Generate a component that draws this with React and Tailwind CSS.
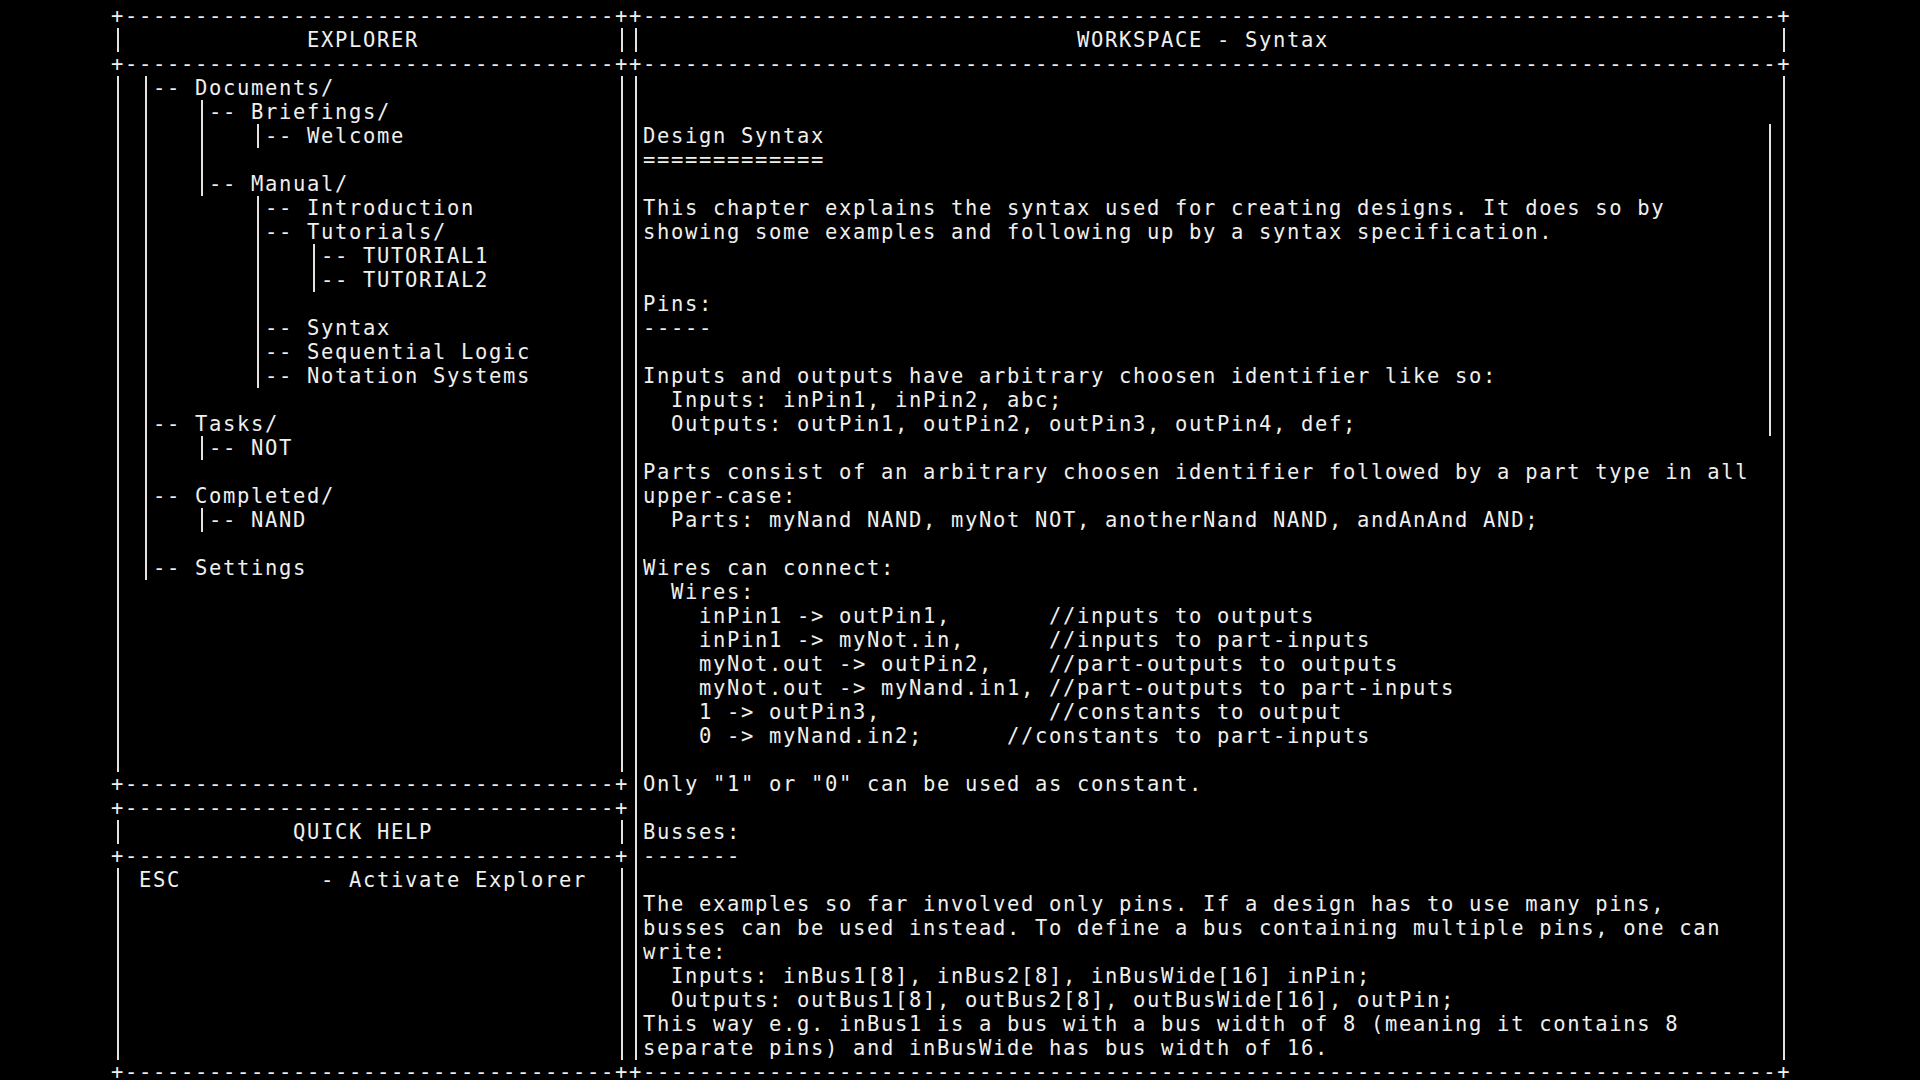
import { Fragment } from "react";

const CH = 14;

const border = (cols) => "+" + "-".repeat(cols - 2) + "+";
const framed = (inner, cols) =>
  "|" + inner.padEnd(cols - 2).slice(0, cols - 2) + "|";

const explorerBody = [
  " |-- Documents/",
  " |   |-- Briefings/",
  " |   |   |-- Welcome",
  " |   |",
  " |   |-- Manual/",
  " |       |-- Introduction",
  " |       |-- Tutorials/",
  " |       |   |-- TUTORIAL1",
  " |       |   |-- TUTORIAL2",
  " |       |",
  " |       |-- Syntax",
  " |       |-- Sequential Logic",
  " |       |-- Notation Systems",
  " |",
  " |-- Tasks/",
  " |   |-- NOT",
  " |",
  " |-- Completed/",
  " |   |-- NAND",
  " |",
  " |-- Settings",
];

const helpBody = [" ESC          - Activate Explorer"];

const workspaceText = [
  "",
  "",
  "Design Syntax",
  "=============",
  "",
  "This chapter explains the syntax used for creating designs. It does so by",
  "showing some examples and following up by a syntax specification.",
  "",
  "",
  "Pins:",
  "-----",
  "",
  "Inputs and outputs have arbitrary choosen identifier like so:",
  "  Inputs: inPin1, inPin2, abc;",
  "  Outputs: outPin1, outPin2, outPin3, outPin4, def;",
  "",
  "Parts consist of an arbitrary choosen identifier followed by a part type in all",
  "upper-case:",
  "  Parts: myNand NAND, myNot NOT, anotherNand NAND, andAnAnd AND;",
  "",
  "Wires can connect:",
  "  Wires:",
  "    inPin1 -> outPin1,       //inputs to outputs",
  "    inPin1 -> myNot.in,      //inputs to part-inputs",
  "    myNot.out -> outPin2,    //part-outputs to outputs",
  "    myNot.out -> myNand.in1, //part-outputs to part-inputs",
  "    1 -> outPin3,            //constants to output",
  "    0 -> myNand.in2;      //constants to part-inputs",
  "",
  'Only "1" or "0" can be used as constant.',
  "",
  "Busses:",
  "-------",
  "",
  "The examples so far involved only pins. If a design has to use many pins,",
  "busses can be used instead. To define a bus containing multiple pins, one can",
  "write:",
  "  Inputs: inBus1[8], inBus2[8], inBusWide[16] inPin;",
  "  Outputs: outBus1[8], outBus2[8], outBusWide[16], outPin;",
  "This way e.g. inBus1 is a bus with a bus width of 8 (meaning it contains 8",
  "separate pins) and inBusWide has bus width of 16.",
];

// scroll thumb sits in the last inner column for rows 5..17
const workspaceBody = workspaceText.map((l, i) =>
  i >= 2 && i <= 14 ? l.padEnd(80) + "|" : l
);

function Bar() {
  return (
    <span className="flex h-6 w-[14px] shrink-0 justify-center">
      <span className="h-full w-[2px] bg-[#e2e2e2]" />
    </span>
  );
}

function Row({ text }) {
  const segs = text.split("|");
  return (
    <div className="flex h-6 leading-6 whitespace-pre">
      {segs.map((s, i) => (
        <Fragment key={i}>
          {i > 0 && <Bar />}
          {s.length > 0 && (
            <span className="shrink-0 overflow-hidden" style={{ width: s.length * CH }}>
              {s}
            </span>
          )}
        </Fragment>
      ))}
    </div>
  );
}

function Box({ cols, title, titleCol, body, height }) {
  const rows = [
    border(cols),
    framed(" ".repeat(titleCol - 1) + title, cols),
    border(cols),
  ];
  for (let i = 0; i < height - 4; i++) rows.push(framed(body[i] || "", cols));
  rows.push(border(cols));

  return (
    <div className="flex flex-col">
      {rows.map((r, i) => (
        <Row key={i} text={r} />
      ))}
    </div>
  );
}

export default function App() {
  return (
    <div className="flex h-screen overflow-hidden bg-black pl-[111px] pt-[4px] font-['DejaVu_Sans_Mono',monospace] text-[20.5px] tracking-[1.66px] text-[#efefef]">
      {/* Left column: explorer + quick help */}
      <div className="flex w-[518px] shrink-0 flex-col">
        <Box cols={37} title="EXPLORER" titleCol={14} body={explorerBody} height={33} />
        <Box cols={37} title="QUICK HELP" titleCol={13} body={helpBody} height={12} />
      </div>

      {/* Workspace */}
      <div className="flex w-[1162px] shrink-0 flex-col">
        <Box cols={83} title="WORKSPACE - Syntax" titleCol={32} body={workspaceBody} height={45} />
      </div>
    </div>
  );
}
